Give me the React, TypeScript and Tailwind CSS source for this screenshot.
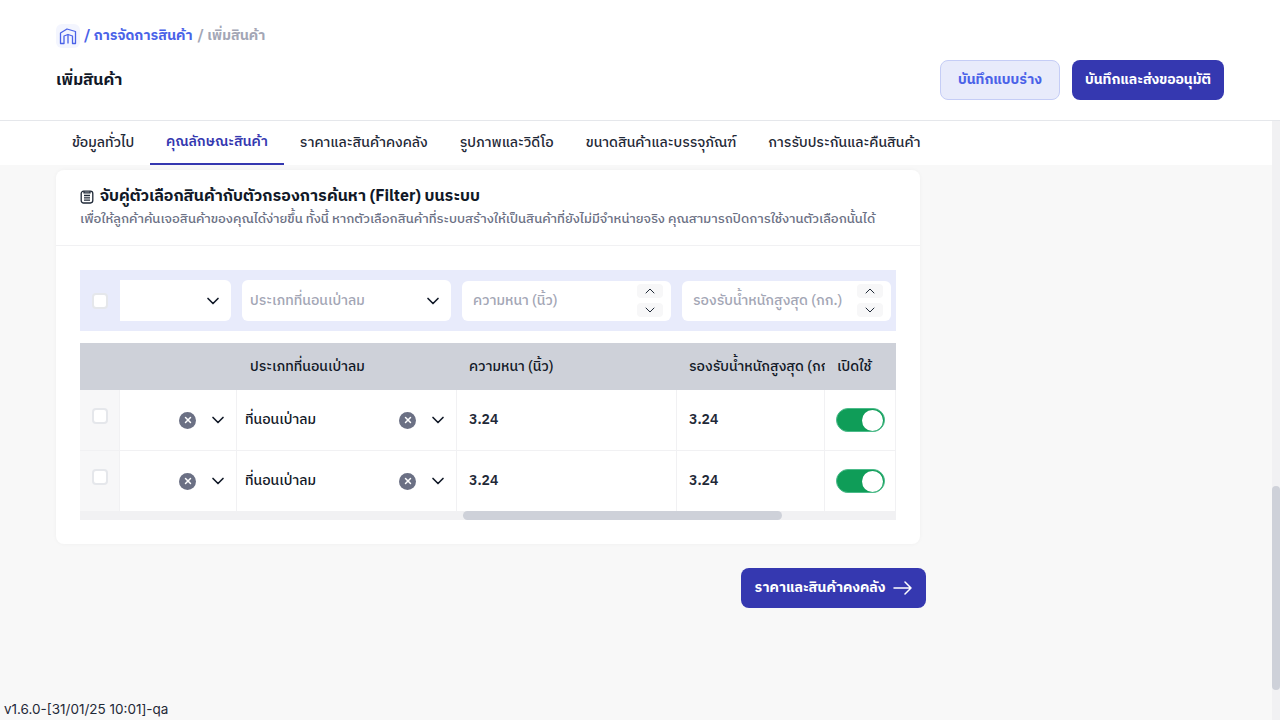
import { ChevronDown, ChevronUp, X } from "lucide-react";

const font = "font-['IBM_Plex_Sans_Thai','Noto_Sans_Thai','Noto_Sans','Inter',sans-serif]";

const tabs = [
  { label: "ข้อมูลทั่วไป", active: false },
  { label: "คุณลักษณะสินค้า", active: true },
  { label: "ราคาและสินค้าคงคลัง", active: false },
  { label: "รูปภาพและวิดีโอ", active: false },
  { label: "ขนาดสินค้าและบรรจุภัณฑ์", active: false },
  { label: "การรับประกันและคืนสินค้า", active: false },
];

function Checkbox() {
  return <div className="w-4 h-4 rounded-[4px] bg-white border-2 border-[#e5e7eb]" />;
}

function Stepper() {
  return (
    <div className="flex flex-col gap-[5px]">
      <div className="w-[26px] h-[14px] rounded bg-[#f7f7f8] flex items-center justify-center">
        <ChevronUp size={16} strokeWidth={1.5} className="text-[#1f2937]" />
      </div>
      <div className="w-[26px] h-[14px] rounded bg-[#f7f7f8] flex items-center justify-center">
        <ChevronDown size={16} strokeWidth={1.5} className="text-[#1f2937]" />
      </div>
    </div>
  );
}

function NumberInput({ placeholder }: { placeholder: string }) {
  return (
    <div className="w-[209px] h-10 rounded-md bg-white flex items-center justify-between pl-[11px] pr-2">
      <span className="text-sm font-medium text-[#a3a6b5] whitespace-nowrap">{placeholder}</span>
      <Stepper />
    </div>
  );
}

function ClearIcon() {
  return (
    <div className="w-[17px] h-[17px] rounded-full bg-[#6b7084] flex items-center justify-center">
      <X size={10} strokeWidth={3.5} className="text-white" />
    </div>
  );
}

function Row({ last }: { last?: boolean }) {
  const cell = "border-r border-[#f1f1f3] h-full flex items-center shrink-0";
  return (
    <div className={`flex bg-white ${last ? "h-[60px]" : "h-[61px] border-b border-[#f1f1f3]"}`}>
      <div className="w-10 shrink-0 h-full bg-[#f7f7f8] border-r border-[#f1f1f3] pt-[18px] pl-3">
        <Checkbox />
      </div>
      <div className={`${cell} w-[117px] justify-end gap-3 pr-2`}>
        <ClearIcon />
        <ChevronDown size={20} className="text-[#111827]" />
      </div>
      <div className={`${cell} w-[220px] pl-2 pr-2 gap-3`}>
        <span className="text-sm font-medium text-[#111827] flex-1">ที่นอนเป่าลม</span>
        <ClearIcon />
        <ChevronDown size={20} className="text-[#111827]" />
      </div>
      <div className={`${cell} w-[220px] pl-3 text-sm font-semibold text-[#1f2937]`}>3.24</div>
      <div className={`${cell} w-[148px] pl-3 text-sm font-semibold text-[#1f2937]`}>3.24</div>
      <div className={`${cell} w-[71px] pl-[11px]`}>
        <div className="w-[49px] h-6 rounded-full bg-[#0f9d58] border border-[#4cbb8a] flex items-center justify-end pr-px">
          <div className="w-[21px] h-[21px] rounded-full bg-white" />
        </div>
      </div>
    </div>
  );
}

export default function App() {
  return (
    <div className={`h-screen w-full overflow-hidden relative bg-[#f8f8f8] flex flex-col ${font}`}>
      <header className="h-[121px] shrink-0 bg-white border-b border-[#e5e7eb] px-14 pt-6">
        <div className="flex items-center gap-[5px] h-6 text-sm font-bold">
          <div className="w-6 h-6 rounded-md bg-[#f3f5fe] flex items-center justify-center">
            <svg width="18" height="18" viewBox="0 0 18 18" fill="none" stroke="#4a62e8" strokeWidth="1.3" strokeLinejoin="round">
              <path d="M1.5 16.5V6L8 2l8.5 2.5v12H13.5V9L9 7.5 5 9v7.5Z" />
              <path d="M9 7.5v9" />
            </svg>
          </div>
          <span className="text-[#4a62e8] -ml-px">/ การจัดการสินค้า</span>
          <span className="text-[#a3a6b5]">/ เพิ่มสินค้า</span>
        </div>
        <div className="flex items-center justify-between mt-[12px]">
          <h1 className="text-base font-bold text-[#111827] pt-px">เพิ่มสินค้า</h1>
          <div className="flex gap-3">
            <button className="w-[120px] h-10 rounded-lg bg-[#e8ebfb] border border-[#c5cdf6] text-sm font-bold text-[#4a62e8]">
              บันทึกแบบร่าง
            </button>
            <button className="w-[152px] h-10 rounded-lg bg-[#3538b0] text-sm font-bold text-white">
              บันทึกและส่งขออนุมัติ
            </button>
          </div>
        </div>
      </header>

      <div className="flex flex-1 min-h-0">
        <main className="flex-1 min-w-0">
          <nav className="h-11 bg-white flex pl-14">
            {tabs.map((t) => (
              <div
                key={t.label}
                className={`h-11 px-4 flex items-center whitespace-nowrap text-sm font-medium ${
                  t.active ? "text-[#3538b0] font-semibold border-b-2 border-[#3538b0]" : "text-[#1f2937]"
                }`}
              >
                {t.label}
              </div>
            ))}
          </nav>

          <div className="pl-14 pt-[5px]">
            <section className="w-[864px] h-[374px] bg-white rounded-lg shadow-[0_0_4px_rgba(0,0,0,0.04)]">
              <div className="h-[76px] border-b border-[#f1f1f3] px-6 pt-[15px]">
                <div className="flex items-center gap-[6px] h-6">
                  <svg width="14" height="14" viewBox="0 0 14 14" fill="none" stroke="#1f2937" strokeWidth="1.3">
                    <rect x="1.2" y="1.2" width="11.6" height="11.8" rx="2.4" />
                    <path d="M4 1.2v1.6h6V1.2M4 5.5h6M4 7.8h6M4 10.2h6" />
                  </svg>
                  <h2 className="text-base font-bold text-[#111827]">
                    จับคู่ตัวเลือกสินค้ากับตัวกรองการค้นหา (Filter) บนระบบ
                  </h2>
                </div>
                <p className="text-[13px] font-medium leading-[20px] text-[#6b7084] whitespace-nowrap">
                  เพื่อให้ลูกค้าค้นเจอสินค้าของคุณได้ง่ายขึ้น ทั้งนี้ หากตัวเลือกสินค้าที่ระบบสร้างให้เป็นสินค้าที่ยังไม่มีจำหน่ายจริง คุณสามารถปิดการใช้งานตัวเลือกนั้นได้
                </p>
              </div>

              <div className="px-6 pt-6">
                <div className="h-[61px] bg-[#e8ebfb] flex items-center">
                  <div className="w-10 shrink-0 pl-3">
                    <Checkbox />
                  </div>
                  <div className="w-[111px] h-[41px] rounded-r-md bg-white flex items-center justify-end pr-2">
                    <ChevronDown size={20} className="text-[#111827]" />
                  </div>
                  <div className="w-[209px] h-[41px] ml-[11px] rounded-md bg-white flex items-center justify-between pl-2 pr-2">
                    <span className="text-sm font-medium text-[#a3a6b5]">ประเภทที่นอนเป่าลม</span>
                    <ChevronDown size={20} className="text-[#111827]" />
                  </div>
                  <div className="ml-[11px]">
                    <NumberInput placeholder="ความหนา (นิ้ว)" />
                  </div>
                  <div className="ml-[11px]">
                    <NumberInput placeholder="รองรับน้ำหนักสูงสุด (กก.)" />
                  </div>
                </div>

                <div className="mt-3 w-[816px] overflow-hidden">
                  <div className="h-[47px] bg-[#ced1d9] flex text-sm font-medium text-[#111827]">
                    <div className="w-10 shrink-0" />
                    <div className="w-[117px] shrink-0" />
                    <div className="w-[220px] shrink-0 pl-[13px] flex items-center">ประเภทที่นอนเป่าลม</div>
                    <div className="w-[220px] shrink-0 pl-3 flex items-center">ความหนา (นิ้ว)</div>
                    <div className="w-[148px] shrink-0 pl-3 flex items-center overflow-hidden whitespace-nowrap">
                      รองรับน้ำหนักสูงสุด (กก.)
                    </div>
                    <div className="w-[71px] shrink-0 pl-3 flex items-center">เปิดใช้</div>
                  </div>
                  <Row />
                  <Row last />
                  <div className="h-[9px] bg-[#f1f1f3] pl-[383px]">
                    <div className="w-[319px] h-[9px] rounded-full bg-[#ced1d9]" />
                  </div>
                </div>
              </div>
            </section>

            <div className="w-[870px] flex justify-end mt-6">
              <button className="w-[185px] h-10 rounded-lg bg-[#3538b0] flex items-center justify-center gap-2 text-sm font-bold text-white">
                ราคาและสินค้าคงคลัง
                <svg width="19" height="14" viewBox="0 0 19 14" fill="none" stroke="white" strokeWidth="1.5" strokeLinecap="round" strokeLinejoin="round">
                  <path d="M1 7h17M12 1l6 6-6 6" />
                </svg>
              </button>
            </div>
          </div>
        </main>

        <div className="w-2 shrink-0 bg-[#f1f1f3] pt-[365px]">
          <div className="w-2 h-[204px] rounded-full bg-[#ced1d9]" />
        </div>
      </div>

      <div className="absolute left-1 bottom-[3px] text-[13.5px] leading-4 text-[#1f2937] font-['Inter',sans-serif]">
        v1.6.0-[31/01/25 10:01]-qa
      </div>
    </div>
  );
}
